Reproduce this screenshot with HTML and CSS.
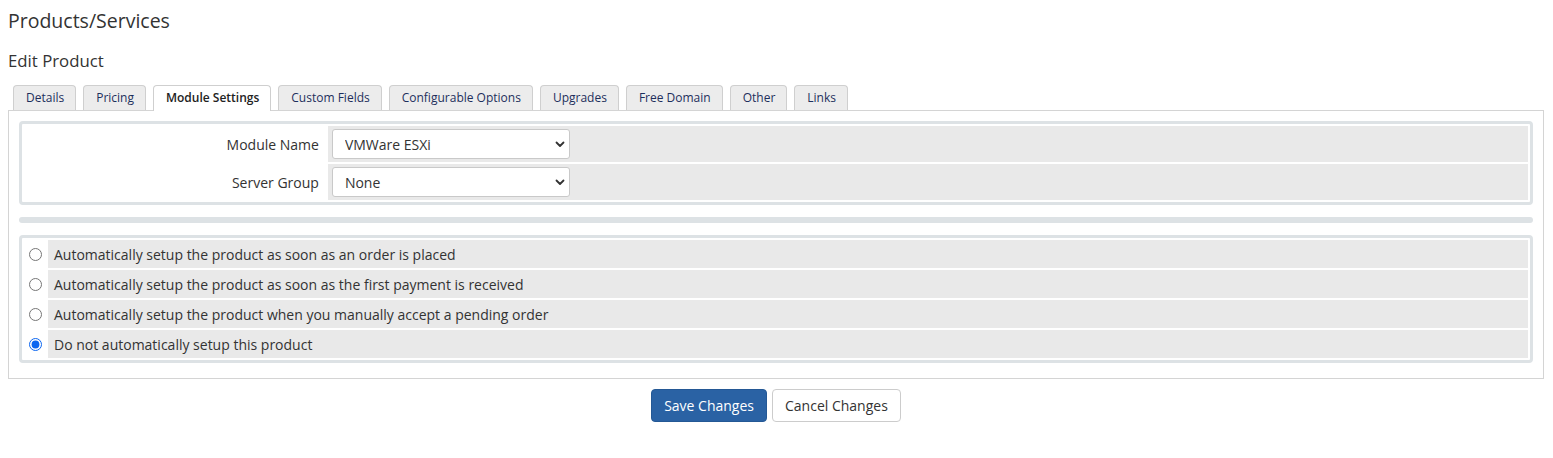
FILE: index.html
```html
<!DOCTYPE html>
<html>
<head>
<meta charset="utf-8">
<link rel="stylesheet" href="styles.css">
</head>
<body>
<div class="page">
  <h1 class="title">Products/Services</h1>
  <h2 class="subtitle">Edit Product</h2>
  <ul class="tabs">
    <li class="tab">Details</li>
    <li class="tab">Pricing</li>
    <li class="tab active">Module Settings</li>
    <li class="tab">Custom Fields</li>
    <li class="tab">Configurable Options</li>
    <li class="tab">Upgrades</li>
    <li class="tab">Free Domain</li>
    <li class="tab">Other</li>
    <li class="tab">Links</li>
  </ul>
  <div class="panel">
    <table class="form">
      <tr>
        <td class="label">Module Name</td>
        <td class="field">
          <span class="select-wrap">
            <select class="select"><option>VMWare ESXi</option></select>
            <svg class="chev" width="10" height="7" viewBox="0 0 10 7"><path d="M1.5 1.5 L5 5 L8.5 1.5" fill="none" stroke="#333" stroke-width="1.8" stroke-linecap="round" stroke-linejoin="round"/></svg>
          </span>
        </td>
      </tr>
      <tr>
        <td class="label">Server Group</td>
        <td class="field">
          <span class="select-wrap">
            <select class="select"><option>None</option></select>
            <svg class="chev" width="10" height="7" viewBox="0 0 10 7"><path d="M1.5 1.5 L5 5 L8.5 1.5" fill="none" stroke="#333" stroke-width="1.8" stroke-linecap="round" stroke-linejoin="round"/></svg>
          </span>
        </td>
      </tr>
    </table>
    <div class="bar"></div>
    <table class="form radios">
      <tr>
        <td class="radio-cell"><input type="radio" name="auto"></td>
        <td class="opt">Automatically setup the product as soon as an order is placed</td>
      </tr>
      <tr>
        <td class="radio-cell"><input type="radio" name="auto"></td>
        <td class="opt">Automatically setup the product as soon as the first payment is received</td>
      </tr>
      <tr>
        <td class="radio-cell"><input type="radio" name="auto"></td>
        <td class="opt">Automatically setup the product when you manually accept a pending order</td>
      </tr>
      <tr>
        <td class="radio-cell"><input type="radio" name="auto" checked></td>
        <td class="opt">Do not automatically setup this product</td>
      </tr>
    </table>
  </div>
  <div class="actions">
    <button class="btn primary">Save Changes</button>
    <button class="btn">Cancel Changes</button>
  </div>
</div>
</body>
</html>
```
FILE: styles.css
```css
* { box-sizing: border-box; }
body {
  margin: 0;
  background: #fff;
  font-family: "Open Sans", "Liberation Sans", sans-serif;
  font-size: 14px;
  color: #333;
}
.page {
  padding: 9px 9px 0 8px;
}
.title {
  margin: 0;
  font-size: 19.5px;
  font-weight: 400;
  line-height: 24px;
  color: #333;
}
.subtitle {
  margin: 17px 0 0;
  font-size: 16.8px;
  font-weight: 400;
  line-height: 22px;
  color: #333;
}
.tabs {
  list-style: none;
  margin: 13px 0 0;
  padding: 0 0 0 5px;
  display: flex;
  gap: 7px;
  position: relative;
  z-index: 1;
}
.tab {
  height: 25px;
  padding: 0 11px 0 12px;
  border: 1px solid #cfcfcf;
  border-bottom: none;
  border-radius: 4px 4px 0 0;
  background: #ececec;
  color: #1d2f5c;
  font-size: 12px;
  line-height: 24px;
  white-space: nowrap;
}
.tab.active {
  background: #fff;
  color: #222;
  font-weight: 600;
  height: 26px;
  margin-bottom: -1px;
}
.panel {
  border: 1px solid #d4d4d4;
  padding: 10px 10px 15px;
  background: #fff;
}
.form {
  width: 100%;
  border: 3px solid #dde2e5;
  border-radius: 4px;
  border-spacing: 2px;
  background: #fff;
}
.form td {
  padding: 0;
}
.label {
  width: 20.1%;
  height: 36px;
  text-align: right;
  padding-right: 7px !important;
  color: #333;
}
.field {
  background: #e9e9e9;
  padding-left: 4px !important;
  height: 36px;
}
.select-wrap {
  position: relative;
  display: inline-block;
  vertical-align: middle;
}
.select {
  -webkit-appearance: none;
  appearance: none;
  width: 238px;
  height: 30px;
  padding: 0 24px 0 12px;
  border: 1px solid #c9c9c9;
  border-radius: 3px;
  background: #fff;
  font-family: "Open Sans", "Liberation Sans", sans-serif;
  font-size: 14px;
  color: #333;
  display: block;
}
.chev {
  position: absolute;
  right: 5px;
  top: 12px;
  pointer-events: none;
}
.bar {
  height: 6px;
  margin: 12px 0 12px;
  background: #dde2e5;
  border-radius: 3px;
}
.radios td {
  height: 28px;
}
.radio-cell {
  width: 22px;
  text-align: center;
}
.radio-cell input {
  margin: -3px 0 0;
  width: 13px;
  height: 13px;
  accent-color: #0c66f0;
  vertical-align: middle;
}
.opt {
  background: #e9e9e9;
  padding-left: 6px !important;
}
.actions {
  margin-top: 10px;
  display: flex;
  justify-content: center;
  gap: 5px;
}
.btn {
  height: 33px;
  padding: 0 12px;
  border: 1px solid #ccc;
  border-radius: 4px;
  background: #fff;
  color: #333;
  font-family: "Open Sans", "Liberation Sans", sans-serif;
  font-size: 14px;
}
.btn.primary {
  background: #2a62a4;
  border-color: #245895;
  color: #fff;
}
```
